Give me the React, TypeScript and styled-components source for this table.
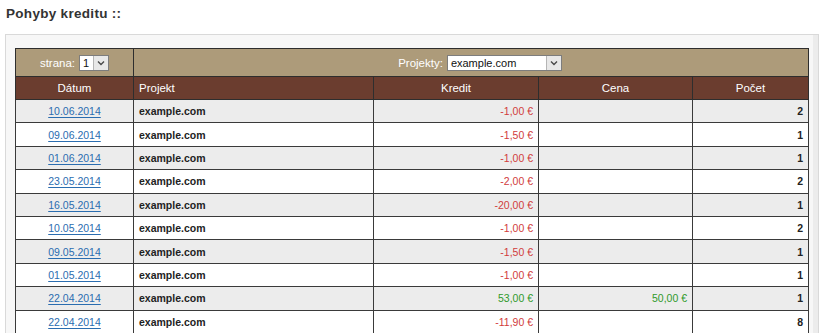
import React from 'react'
import styled, {createGlobalStyle} from 'styled-components'

const GlobalStyle = createGlobalStyle`
    body {
        margin: 0;
        background: #ffffff;
        font-family: 'Liberation Sans', Arial, sans-serif;
    }
`

const Page = styled.div`
    padding: 5px 6px 0 5px;
`

const Title = styled.h2`
    margin: 0 0 12px 1px;
    font-size: 13.5px;
    line-height: 17px;
    letter-spacing: 0.3px;
    font-weight: bold;
    color: #333333;
`

const Panel = styled.div`
    width: 795px;
    border: 1px solid #d9d9d9;
    background: #f7f7f7;
    padding: 13px 8px 0 9px;
    box-shadow: inset -5px 0 0 #ececec;
`

const Table = styled.table`
    width: 793px;
    border-collapse: collapse;
    table-layout: fixed;
    border: 1px solid #3a3a3a;
    font-size: 10.5px;
`

const FilterRow = styled.tr`
    background: #ad9b7a;
`

const FilterCell = styled.td<{$shift?: number}>`
    height: 27px;
    padding: 0 0 0 ${p => p.$shift || 0}px;
    border: 1px solid #2e2e2e;
    text-align: center;
    color: #ffffff;
    font-size: 11.5px;
`

const FilterGroup = styled.div`
    display: inline-flex;
    align-items: center;
    gap: 4px;
`

const SelectBox = styled.div<{$w: number}>`
    display: flex;
    align-items: stretch;
    width: ${p => p.$w}px;
    height: 16px;
    box-sizing: border-box;
    border: 1px solid #7d7d7d;
    background: #ffffff;
    color: #111111;
    font-size: 11px;
`

const SelectValue = styled.span`
    flex: 1;
    padding-left: 3px;
    line-height: 14px;
    text-align: left;
`

const SelectArrow = styled.span`
    width: 14px;
    display: flex;
    align-items: center;
    justify-content: center;
    border-left: 1px solid #b5b5b5;
    background: #e8e8e8;
`

const HeadRow = styled.tr`
    background: #6b3d2f;
`

const HeadCell = styled.th<{$align?: string}>`
    height: 22px;
    padding: 0 5px;
    border: 1px solid #2e2e2e;
    color: #ffffff;
    font-weight: normal;
    font-size: 11.5px;
    text-align: ${p => p.$align || 'center'};
`

const Row = styled.tr<{$alt: boolean}>`
    background: ${p => (p.$alt ? '#ececec' : '#ffffff')};
`

const Cell = styled.td<{$align?: string; $color?: string; $bold?: boolean}>`
    height: 22.4px;
    padding: 0 5px;
    border: 1px solid #3a3a3a;
    text-align: ${p => p.$align || 'left'};
    color: ${p => p.$color || '#222222'};
    font-weight: ${p => (p.$bold ? 'bold' : 'normal')};
`

const DateLink = styled.a`
    color: #2a6db0;
    text-decoration: underline;
    text-underline-offset: 2px;
`

const Chevron = () => (
    <svg width="8" height="6" viewBox="0 0 8 6">
        <path d="M1 1.5 L4 4.5 L7 1.5" fill="none" stroke="#4a4a4a" strokeWidth="1.4" />
    </svg>
)

const FakeSelect: React.FC<{value: string; width: number}> = ({value, width}) => (
    <SelectBox $w={width}>
        <SelectValue>{value}</SelectValue>
        <SelectArrow>
            <Chevron />
        </SelectArrow>
    </SelectBox>
)

const RED = '#d13c3c'
const GREEN = '#2f9a2a'

const moves = [
    {date: '10.06.2014', credit: '-1,00 €', price: '', count: 2},
    {date: '09.06.2014', credit: '-1,50 €', price: '', count: 1},
    {date: '01.06.2014', credit: '-1,00 €', price: '', count: 1},
    {date: '23.05.2014', credit: '-2,00 €', price: '', count: 2},
    {date: '16.05.2014', credit: '-20,00 €', price: '', count: 1},
    {date: '10.05.2014', credit: '-1,00 €', price: '', count: 2},
    {date: '09.05.2014', credit: '-1,50 €', price: '', count: 1},
    {date: '01.05.2014', credit: '-1,00 €', price: '', count: 1},
    {date: '22.04.2014', credit: '53,00 €', price: '50,00 €', count: 1},
    {date: '22.04.2014', credit: '-11,90 €', price: '', count: 8},
]

const App: React.FC = () => {
    return (
        <Page>
            <GlobalStyle />
            <Title>Pohyby kreditu ::</Title>
            <Panel>
                <Table>
                    <colgroup>
                        <col style={{width: 118}} />
                        <col style={{width: 240}} />
                        <col style={{width: 165}} />
                        <col style={{width: 154}} />
                        <col style={{width: 116}} />
                    </colgroup>
                    <thead>
                        <FilterRow>
                            <FilterCell>
                                <FilterGroup>
                                    strana: <FakeSelect value="1" width={30} />
                                </FilterGroup>
                            </FilterCell>
                            <FilterCell colSpan={4} $shift={18}>
                                <FilterGroup>
                                    Projekty: <FakeSelect value="example.com" width={115} />
                                </FilterGroup>
                            </FilterCell>
                        </FilterRow>
                        <HeadRow>
                            <HeadCell>Dátum</HeadCell>
                            <HeadCell $align="left">Projekt</HeadCell>
                            <HeadCell>Kredit</HeadCell>
                            <HeadCell>Cena</HeadCell>
                            <HeadCell>Počet</HeadCell>
                        </HeadRow>
                    </thead>
                    <tbody>
                        {moves.map((m, i) => {
                            const color = m.credit.startsWith('-') ? RED : GREEN
                            return (
                                <Row key={i} $alt={i % 2 === 0}>
                                    <Cell $align="center">
                                        <DateLink href="#">{m.date}</DateLink>
                                    </Cell>
                                    <Cell $bold>example.com</Cell>
                                    <Cell $align="right" $color={color}>{m.credit}</Cell>
                                    <Cell $align="right" $color={GREEN}>{m.price}</Cell>
                                    <Cell $align="right" $bold>{m.count}</Cell>
                                </Row>
                            )
                        })}
                    </tbody>
                </Table>
            </Panel>
        </Page>
    )
}

export default App
